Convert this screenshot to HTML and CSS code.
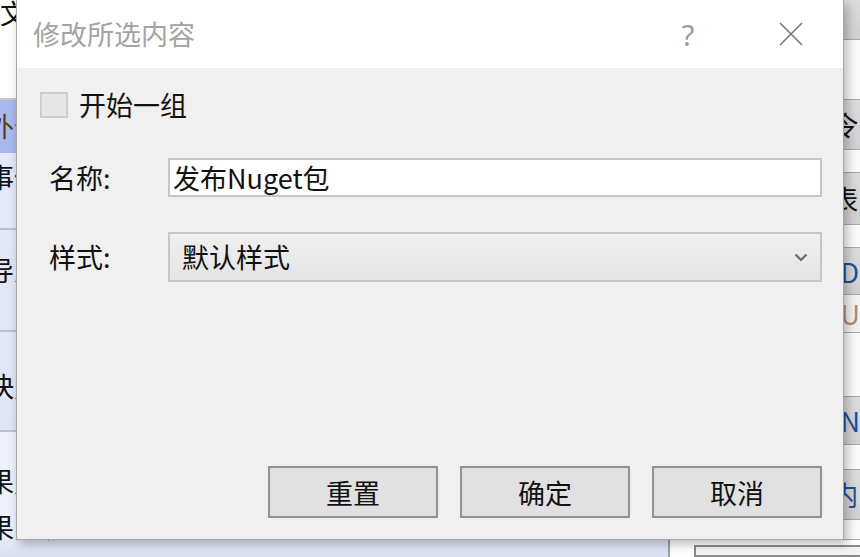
FILE: index.html
```html
<!DOCTYPE html>
<html lang="zh-CN">
<head>
<meta charset="utf-8">
<title>修改所选内容</title>
<link rel="stylesheet" href="styles.css">
</head>
<body>
<div class="app">
  <div class="side">
    <div class="srow head"><span class="stext">文件</span></div>
    <div class="srow sel"><span class="stext">外部工具</span></div>
    <div class="srow r2"><span class="stext">事件</span></div>
    <div class="srow r3"><span class="stext">导入</span></div>
    <div class="srow r4"><span class="stext">快照</span></div>
    <div class="srow r5"><span class="stext">果照</span><span class="stext">果比较...</span></div>
  </div>
  <div class="vline"></div>
  <div class="main">
    <div class="grid">
      <div class="grow g h40"></div>
      <div class="grow w h60"></div>
      <div class="grow g h50"><span>令</span></div>
      <div class="grow w h23"></div>
      <div class="grow g h52"><span>表</span></div>
      <div class="grow w h23"></div>
      <div class="grow g h47"><span class="blue">(D</span></div>
      <div class="grow l h38"><span class="dim">(U</span></div>
      <div class="grow w h64"></div>
      <div class="grow g h48"><span class="blue">(N</span></div>
      <div class="grow w h25"></div>
      <div class="grow g h50"><span class="blue">内</span></div>
      <div class="grow w h20"></div>
    </div>
    <div class="bottombox"></div>
  </div>
</div>

<div class="dialog">
  <div class="titlebar">
    <div class="title">修改所选内容</div>
    <div class="tbtn help">?</div>
    <div class="tbtn close">
      <svg width="24" height="24" viewBox="0 0 24 24"><path d="M1 1L23 23M23 1L1 23" stroke="#7a7a7a" stroke-width="1.6" fill="none"/></svg>
    </div>
  </div>
  <div class="body">
    <div class="check-row">
      <span class="checkbox"></span>
      <span class="check-label">开始一组</span>
    </div>
    <div class="form-row row-name">
      <span class="label">名称:</span>
      <div class="input">发布Nuget包</div>
    </div>
    <div class="form-row row-style">
      <span class="label">样式:</span>
      <div class="select">
        <span class="sel-text">默认样式</span>
        <svg class="chev" width="14" height="9" viewBox="0 0 14 9"><path d="M1.5 1.5L7 7L12.5 1.5" stroke="#6a6a6a" stroke-width="2.2" fill="none"/></svg>
      </div>
    </div>
    <div class="buttons">
      <div class="btn">重置</div>
      <div class="btn">确定</div>
      <div class="btn">取消</div>
    </div>
  </div>
</div>
</body>
</html>
```
FILE: styles.css
```css
* { box-sizing: border-box; }
html, body {
  margin: 0;
  padding: 0;
  width: 860px;
  height: 557px;
  overflow: hidden;
  background: #fff;
  font-family: "Noto Sans CJK SC", "Noto Sans", sans-serif;
  color: #111;
}

/* background application */
.app {
  display: flex;
  width: 860px;
  height: 557px;
}
.side {
  width: 682px;
  display: flex;
  flex-direction: column;
  background: linear-gradient(#e6eaf7, #dfe4f5);
}
.srow {
  border-bottom: 2px solid #b9c1d8;
  font-size: 27px;
  line-height: 32px;
  display: flex;
  flex-direction: column;
  overflow: hidden;
  white-space: nowrap;
}
.stext { margin-left: -13px; }
.srow.head { height: 100px; background: #fff; border-bottom-color: #c8c8c8; line-height: 26px; }
.srow.head .stext { margin-left: 0; color: #111; }
.srow.sel { height: 53px; background: #a9b9ee; padding-top: 10px; border-bottom: none; color: #5a3a10; }
.srow.r2 { height: 77px; padding-top: 8px; }
.srow.r3 { height: 102px; padding-top: 24px; }
.srow.r4 { height: 100px; padding-top: 38px; }
.srow.r5 { flex: 1; padding-top: 26px; border-bottom: none; line-height: 46px; background: linear-gradient(#eef1fa 0, #eef1fa 80%, #d9def3 100%); }
.vline { width: 2px; background: #a0a0a0; }
.main {
  flex: 1;
  display: flex;
  flex-direction: column;
  background: #fff;
}
.grid { display: flex; flex-direction: column; }
.grow {
  padding-left: 161px;
  font-size: 27px;
  display: flex;
  align-items: center;
  overflow: hidden;
  white-space: nowrap;
  border-bottom: 1px solid #a8a8a8;
}
.grow.g { background: linear-gradient(#dcdcdc, #d0d0d0); }
.grow.w { background: #fbfbfb; }
.grow.l { background: #f2f2f2; }
.blue { color: #1f4f9a; }
.dim { color: #b08a60; }
.h20 { height: 20px; } .h23 { height: 23px; } .h25 { height: 25px; }
.h38 { height: 38px; } .h40 { height: 40px; } .h47 { height: 47px; }
.h48 { height: 48px; } .h50 { height: 50px; } .h52 { height: 52px; }
.h60 { height: 60px; } .h64 { height: 64px; }
.bottombox {
  margin: 5px 0 0 24px;
  height: 20px;
  border: 2px solid #8a8a8a;
  border-right: none;
  background: #f4f4f4;
}

/* dialog */
.dialog {
  position: absolute;
  left: 16px;
  top: 0;
  width: 828px;
  height: 540px;
  background: #f0f0f0;
  border: 1px solid #a6a6a6;
  border-top: none;
  box-shadow: 3px 4px 10px rgba(0, 0, 0, 0.28);
  display: flex;
  flex-direction: column;
}
.titlebar {
  height: 68px;
  background: #fff;
  display: flex;
  align-items: center;
  padding-left: 16px;
  padding-right: 22px;
}
.title {
  flex: 1;
  font-size: 27px;
  color: #a3a3a3;
  line-height: 30px;
}
.tbtn {
  width: 60px;
  height: 60px;
  display: flex;
  align-items: center;
  justify-content: center;
}
.help {
  font-family: "Noto Sans", sans-serif;
  font-size: 29px;
  color: #9a9a9a;
  margin-right: 43px;
}
.body {
  flex: 1;
  display: flex;
  flex-direction: column;
  padding: 24px 21px 21px 0;
}
.check-row {
  display: flex;
  align-items: center;
  gap: 11px;
  margin-left: 23px;
  height: 26px;
}
.checkbox {
  width: 28px;
  height: 26px;
  border: 2px solid #cdcdcd;
  background: #e6e6e6;
}
.check-label {
  font-size: 27px;
  line-height: 26px;
}
.form-row {
  display: flex;
  align-items: center;
  margin-left: 32px;
}
.row-name { margin-top: 40px; }
.row-style { margin-top: 35px; }
.label {
  width: 119px;
  font-size: 27px;
  line-height: 30px;
}
.input {
  flex: 1;
  height: 39px;
  background: #fff;
  border: 2px solid #c6c6c6;
  font-size: 27px;
  line-height: 35px;
  padding-left: 3px;
  color: #111;
}
.select {
  flex: 1;
  height: 50px;
  border: 2px solid #c6c6c6;
  background: linear-gradient(#f0f0f0, #e4e4e4);
  display: flex;
  align-items: center;
  padding-left: 12px;
  padding-right: 12px;
}
.sel-text {
  flex: 1;
  font-size: 27px;
  line-height: 30px;
}
.chev { display: block; }
.buttons {
  margin-top: auto;
  display: flex;
  justify-content: flex-end;
  gap: 22px;
}
.btn {
  width: 170px;
  height: 52px;
  background: #e1e1e1;
  border: 2px solid #929292;
  font-size: 27px;
  display: flex;
  align-items: center;
  justify-content: center;
  color: #111;
}
```
